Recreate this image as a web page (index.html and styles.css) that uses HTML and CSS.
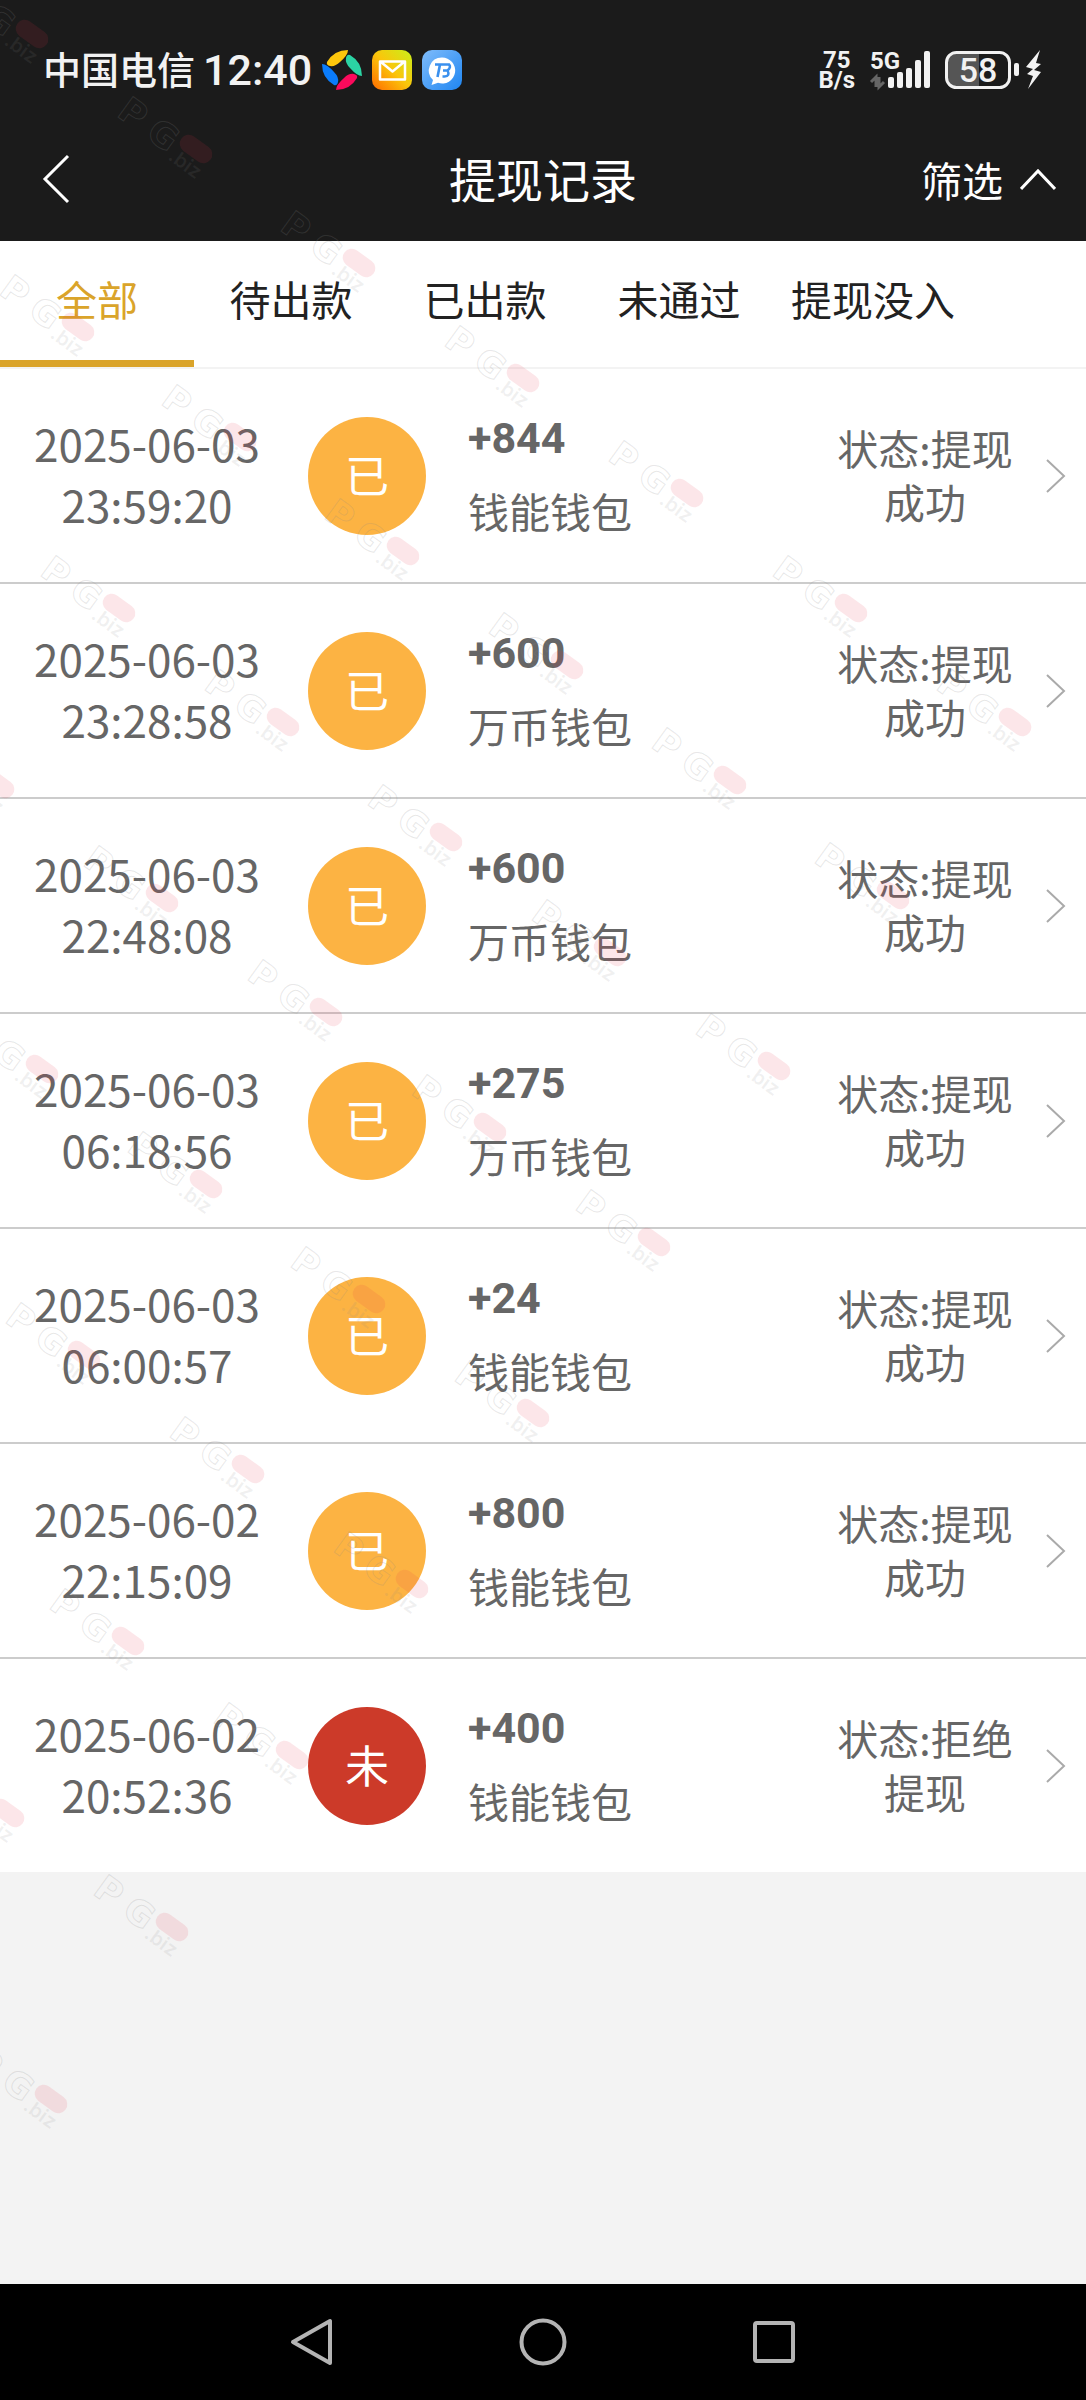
FILE: index.html
```html
<!DOCTYPE html>
<html lang="zh-CN">
<head>
<meta charset="utf-8">
<meta name="viewport" content="width=device-width, initial-scale=1">
<title>提现记录</title>
<link rel="stylesheet" href="styles.css">
</head>
<body>
<div class="screen">
  <header class="top">
    <div class="status-bar">
      <span class="carrier">中国电信</span>
      <time class="clock">12:40</time>
      <div class="notices">
        <svg width="40" height="40" viewBox="0 0 40 40" aria-hidden="true">
          <path d="M5 12Q12 0 26 0Q26 5 18 12Q13 17 8 16Q4 15 5 12Z" fill="#fdc70c"/>
          <path d="M28 5Q40 12 40 26Q35 26 28 18Q23 13 24 8Q25 4 28 5Z" fill="#2bd4a4"/>
          <path d="M35 28Q28 40 14 40Q14 35 22 28Q27 23 32 24Q36 25 35 28Z" fill="#fb0a5c"/>
          <path d="M12 35Q0 28 0 14Q5 14 12 22Q17 27 16 32Q15 36 12 35Z" fill="#0a7cfb"/>
        </svg>
        <svg width="40" height="40" viewBox="0 0 40 40" aria-hidden="true">
          <defs><linearGradient id="mail" x1="0" y1="1" x2="1" y2="0"><stop offset="0" stop-color="#ff6a00"/><stop offset=".5" stop-color="#fbc50b"/><stop offset="1" stop-color="#c9f01a"/></linearGradient></defs>
          <rect width="40" height="40" rx="10" fill="url(#mail)"/>
          <path d="M8 11.500H33V29.500H8ZM9 12L20.500 21.500L32 12" fill="none" stroke="#fff" stroke-width="2.500" stroke-linejoin="round"/>
        </svg>
        <svg width="40" height="40" viewBox="0 0 40 40" aria-hidden="true">
          <defs><linearGradient id="chat" x1="0" y1="0" x2="1" y2="1"><stop offset="0" stop-color="#7fbcfb"/><stop offset="1" stop-color="#1f86f2"/></linearGradient></defs>
          <rect width="40" height="40" rx="10" fill="url(#chat)"/>
          <path d="M20 7.500a13 13 0 1 1-4 25.300L9.500 35l1.500-5A13 13 0 0 1 20 7.500Z" fill="#fff"/>
          <path d="M13 14.500H27Q29.500 17 25.500 20.500Q28.500 26 22.500 26.500H20.500M18 14.500L15.500 27M21 20.500H25.500" fill="none" stroke="#3a90ee" stroke-width="2.600"/>
        </svg>
      </div>
      <div class="speed"><span>75</span><span>B/s</span></div>
      <svg class="gauges" width="173" height="40" viewBox="0 0 173 40" role="img" aria-label="5G，电量 58">
        <text x="0" y="19" class="gauge-net">5G</text>
        <path d="M1 32L6 27V37M9 27V37L14 32" fill="none" stroke="#666" stroke-width="3"/>
        <g fill="#f2f2f2">
          <rect x="18" y="27" width="6" height="11" rx="2"/><rect x="27" y="22" width="6" height="16" rx="2"/><rect x="36" y="18" width="6" height="20" rx="2"/><rect x="45" y="10" width="6" height="28" rx="2"/><rect x="54" y="1" width="6" height="37" rx="2"/>
          <rect x="144" y="13" width="5" height="13" rx="2"/>
          <path d="M170 0L156 17L163 19L157 24L163 26L158 39L171 22L164 20L171 14L166 13Z"/>
        </g>
        <path d="M88 3H109V37H88A11 11 0 0 1 77 26V14A11 11 0 0 1 88 3Z" fill="#555"/>
        <rect x="76.500" y="2.500" width="63" height="35" rx="10" fill="none" stroke="#f2f2f2" stroke-width="3"/>
        <text x="108" y="32" text-anchor="middle" class="gauge-level">58</text>
      </svg>
    </div>
    <div class="title-bar">
      <button class="back" type="button" aria-label="返回">
        <svg width="28" height="50" viewBox="0 0 28 50"><path d="M26 2L3 25L26 48" fill="none" stroke="#fff" stroke-width="3"/></svg>
      </button>
      <h1>提现记录</h1>
      <button class="filter" type="button">筛选
        <svg width="36" height="24" viewBox="0 0 36 24"><path d="M1 22L18 4L35 22" fill="none" stroke="#fff" stroke-width="3"/></svg>
      </button>
    </div>
  </header>

  <nav class="tabs">
    <a class="tab active" href="#all" aria-current="page">全部</a>
    <a class="tab" href="#pending">待出款</a>
    <a class="tab" href="#paid">已出款</a>
    <a class="tab" href="#failed">未通过</a>
    <a class="tab" href="#seized">提现没入</a>
  </nav>

  <main>
    <ul class="records">
      <li><a class="record" href="#r1"><time class="when">2025-06-03<br>23:59:20</time><span class="badge">已</span><span class="detail"><b>+844</b><span>钱能钱包</span></span><span class="state">状态:提现成功</span><svg class="go" viewBox="0 0 20 34"><path d="M1 1L18 17L1 33"/></svg></a></li>
      <li><a class="record" href="#r2"><time class="when">2025-06-03<br>23:28:58</time><span class="badge">已</span><span class="detail"><b>+600</b><span>万币钱包</span></span><span class="state">状态:提现成功</span><svg class="go" viewBox="0 0 20 34"><path d="M1 1L18 17L1 33"/></svg></a></li>
      <li><a class="record" href="#r3"><time class="when">2025-06-03<br>22:48:08</time><span class="badge">已</span><span class="detail"><b>+600</b><span>万币钱包</span></span><span class="state">状态:提现成功</span><svg class="go" viewBox="0 0 20 34"><path d="M1 1L18 17L1 33"/></svg></a></li>
      <li><a class="record" href="#r4"><time class="when">2025-06-03<br>06:18:56</time><span class="badge">已</span><span class="detail"><b>+275</b><span>万币钱包</span></span><span class="state">状态:提现成功</span><svg class="go" viewBox="0 0 20 34"><path d="M1 1L18 17L1 33"/></svg></a></li>
      <li><a class="record" href="#r5"><time class="when">2025-06-03<br>06:00:57</time><span class="badge">已</span><span class="detail"><b>+24</b><span>钱能钱包</span></span><span class="state">状态:提现成功</span><svg class="go" viewBox="0 0 20 34"><path d="M1 1L18 17L1 33"/></svg></a></li>
      <li><a class="record" href="#r6"><time class="when">2025-06-02<br>22:15:09</time><span class="badge">已</span><span class="detail"><b>+800</b><span>钱能钱包</span></span><span class="state">状态:提现成功</span><svg class="go" viewBox="0 0 20 34"><path d="M1 1L18 17L1 33"/></svg></a></li>
      <li><a class="record" href="#r7"><time class="when">2025-06-02<br>20:52:36</time><span class="badge refused">未</span><span class="detail"><b>+400</b><span>钱能钱包</span></span><span class="state">状态:拒绝提现</span><svg class="go" viewBox="0 0 20 34"><path d="M1 1L18 17L1 33"/></svg></a></li>
    </ul>
  </main>

  <footer class="system-nav">
    <button type="button" aria-label="返回"><svg width="50" height="50" viewBox="0 0 50 50"><path d="M43 4V46L6 25Z"/></svg></button>
    <button type="button" aria-label="主屏幕"><svg width="50" height="50" viewBox="0 0 50 50"><circle cx="25" cy="25" r="21.500"/></svg></button>
    <button type="button" aria-label="最近任务"><svg width="50" height="50" viewBox="0 0 50 50"><rect x="6" y="6" width="38" height="38" rx="2"/></svg></button>
  </footer>

  <svg class="watermark" aria-hidden="true">
    <defs>
      <g id="mark">
        <g transform="rotate(36)">
          <text class="mark-name" x="-85 -49" y="20">PG</text>
          <rect class="mark-pill" x="-18" y="-9" width="36" height="18" rx="9"/>
          <text class="mark-tld" x="0" y="25" text-anchor="middle">.biz</text>
        </g>
      </g>
    </defs>
    <use href="#mark" x="32" y="34"/><use href="#mark" x="196" y="149"/><use href="#mark" x="359" y="263"/><use href="#mark" x="523" y="378"/><use href="#mark" x="687" y="493"/><use href="#mark" x="851" y="608"/><use href="#mark" x="1015" y="722"/>
    <use href="#mark" x="78" y="327"/><use href="#mark" x="240" y="437"/><use href="#mark" x="403" y="551"/><use href="#mark" x="567" y="665"/><use href="#mark" x="730" y="780"/><use href="#mark" x="893" y="895"/>
    <use href="#mark" x="119" y="608"/><use href="#mark" x="283" y="722"/><use href="#mark" x="446" y="837"/><use href="#mark" x="610" y="952"/><use href="#mark" x="774" y="1066"/>
    <use href="#mark" x="-2" y="784"/><use href="#mark" x="162" y="898"/><use href="#mark" x="326" y="1012"/><use href="#mark" x="490" y="1127"/><use href="#mark" x="654" y="1242"/>
    <use href="#mark" x="42" y="1069"/><use href="#mark" x="206" y="1184"/><use href="#mark" x="369" y="1299"/><use href="#mark" x="533" y="1413"/>
    <use href="#mark" x="84" y="1355"/><use href="#mark" x="248" y="1469"/><use href="#mark" x="412" y="1584"/>
    <use href="#mark" x="128" y="1641"/><use href="#mark" x="292" y="1755"/>
    <use href="#mark" x="8" y="1813"/><use href="#mark" x="172" y="1927"/><use href="#mark" x="51" y="2099"/>
  </svg>
</div>
</body>
</html>
```
FILE: styles.css
```css
* { box-sizing: border-box; }

body {
  margin: 0;
  font-family: "Noto Sans CJK SC", sans-serif;
  font-size: 41px;
  color: #222;
  background: #f3f3f3;
}

button {
  padding: 0;
  border: 0;
  background: none;
  color: inherit;
  font: inherit;
}

a { color: inherit; text-decoration: none; }
svg { flex: none; }

.screen {
  position: relative;
  display: flex;
  flex-direction: column;
  min-height: 100vh;
  overflow: hidden;
}

.top { background: #1b1b1b; color: #fff; }

.status-bar {
  display: flex;
  align-items: center;
  height: 120px;
  padding: 20px 43px 0;
  color: #f2f2f2;
}

.carrier { padding-bottom: 4px; font-size: 38px; font-weight: 500; line-height: 40px; }

.clock {
  margin-left: 8px;
  font: 500 43px/40px Roboto, sans-serif;
}

.notices { display: flex; gap: 10px; margin-left: 10px; }

.speed {
  display: flex;
  flex-direction: column;
  align-items: center;
  margin-left: auto;
  font: 700 24px/20px Roboto, sans-serif;
}

.gauges { margin-left: 15px; overflow: visible; }
.gauge-net { font: 700 24px Roboto, sans-serif; fill: #f2f2f2; }
.gauge-level { font: 500 34px Roboto, sans-serif; fill: #f2f2f2; }

.title-bar {
  display: grid;
  grid-template-columns: 1fr auto 1fr;
  align-items: center;
  height: 121px;
  padding: 0 30px 4px 42px;
}

.title-bar h1 {
  margin: 0;
  padding: 0 12px 2px 0;
  font-size: 47px;
  font-weight: 400;
  line-height: 60px;
}

.back { justify-self: start; display: flex; }

.filter {
  justify-self: end;
  display: flex;
  align-items: center;
  gap: 17px;
  line-height: 60px;
}

.tabs {
  display: flex;
  background: #fff;
  border-bottom: 2px solid #f3f3f3;
}

.tab {
  width: 194px;
  padding-bottom: 4px;
  border-bottom: 7px solid transparent;
  line-height: 115px;
  text-align: center;
  white-space: nowrap;
}

.tab.active { color: #daa42a; border-color: #daa42a; }

main { flex: 1; }

.records {
  margin: 0;
  padding: 0;
  list-style: none;
  background: #fff;
  color: #666;
}

.records li + li { border-top: 2px solid #ccc; }

.record {
  display: grid;
  grid-template-columns: 294px 146px 1fr 200px 61px;
  align-items: center;
  min-height: 213px;
}

.when { padding-bottom: 4px; font-size: 44px; line-height: 61px; text-align: center; }

.badge {
  justify-self: center;
  width: 118px;
  padding-bottom: 4px;
  border-radius: 50%;
  background: #fcb343;
  color: #fff;
  font-size: 44px;
  line-height: 114px;
  text-align: center;
}

.badge.refused { background: #cc3a29; }

.detail {
  display: flex;
  flex-direction: column;
  padding: 0 0 3px 28px;
  line-height: 72px;
}

.detail b { font-family: Roboto, sans-serif; font-size: 43px; }

.state { padding-bottom: 4px; line-height: 54px; text-align: center; word-break: break-all; }

.go { width: 20px; height: 34px; margin-left: 21px; fill: none; stroke: #aaa; stroke-width: 2; }

.system-nav {
  display: flex;
  justify-content: center;
  align-items: center;
  gap: 181px;
  height: 116px;
  background: #000;
}

.system-nav button { display: flex; }
.system-nav svg { fill: none; stroke: #b4b4b4; stroke-width: 4; stroke-linejoin: round; }

.watermark {
  position: absolute;
  inset: 0;
  width: 100%;
  height: 100%;
  pointer-events: none;
}

.mark-name { font: 700 35px "DejaVu Sans", sans-serif; fill: none; stroke: #888; stroke-opacity: .2; stroke-width: 1; }
.mark-tld { font: 600 20px Inter, sans-serif; fill: #888; fill-opacity: .12; }
.mark-pill { fill: #e6324b; fill-opacity: .12; }
```
